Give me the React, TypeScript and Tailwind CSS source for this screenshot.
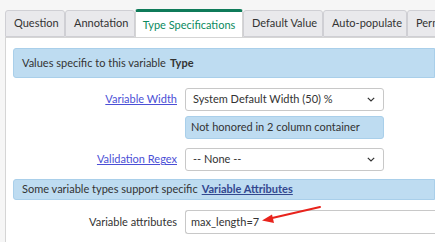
import React from "react";

const tabs = [
  { label: "Question", w: "w-[60px]" },
  { label: "Annotation", w: "w-[70px]" },
  { label: "Type Specifications", w: "w-[108px]", active: true },
  { label: "Default Value", w: "w-[80px]" },
  { label: "Auto-populate", w: "w-[84px]" },
  { label: "Permissions", w: "w-[90px]" },
];

function Chevron() {
  return (
    <svg width="8" height="5" viewBox="0 0 8 5" className="shrink-0">
      <path d="M0.8 0.8l3.2 3.2 3.2-3.2" fill="none" stroke="#333" strokeWidth="1.2" />
    </svg>
  );
}

export default function App() {
  return (
    <div className="relative w-[435px] h-[242px] overflow-hidden bg-[#f6f6f6] font-['Lato','Noto_Sans',sans-serif] text-[11px] text-[#333]">
      <div className="flex pt-[9px] pl-[5px] whitespace-nowrap">
        {tabs.map((t) =>
          t.active ? (
            <div
              key={t.label}
              className={`${t.w} shrink-0 h-[28px] -mb-px bg-white border-t-[3px] border-t-[#0f7b5a] border-x border-x-[#d5d5d5] rounded-t-[3px] flex items-center justify-center text-[#0a8a60] pt-[1px] z-10`}
            >
              {t.label}
            </div>
          ) : (
            <div
              key={t.label}
              className={`${t.w} shrink-0 h-[27px] mt-[1px] bg-[#e9e9ec] border border-[#cfcfd4] rounded-t-[3px] flex items-center pl-[8px] overflow-hidden`}
            >
              {t.label}
            </div>
          )
        )}
      </div>

      <div className="ml-[5px] bg-white border-l border-t border-[#d5d5d5] pl-[7px] pt-[10px] h-full">
        <div className="h-[30px] bg-[#bedcf1] border border-[#a9cfea] rounded-l-[3px] flex items-center pl-[8px]">
          Values specific to this variable <b className="ml-1 font-bold">Type</b>
        </div>

        <div className="flex mt-[10px]">
          <div className="w-[164px] h-[23px] flex items-center justify-end">
            <a className="text-[#4b4fd6] underline">Variable Width</a>
          </div>
          <div className="ml-[8px] w-[199px]">
            <div className="h-[23px] border border-[#c8c8c8] rounded-[3px] bg-white flex items-center justify-between pl-[7px] pr-[8px]">
              <span>System Default Width (50) %</span>
              <Chevron />
            </div>
            <div className="h-[23px] mt-[5px] bg-[#bedcf1] border border-[#a9cfea] rounded-[3px] flex items-center pl-[5px]">
              Not honored in 2 column container
            </div>
          </div>
        </div>

        <div className="flex mt-[9px]">
          <div className="w-[164px] h-[23px] flex items-center justify-end">
            <a className="text-[#4b4fd6] underline">Validation Regex</a>
          </div>
          <div className="ml-[8px] w-[199px] h-[23px] border border-[#c8c8c8] rounded-[3px] bg-white flex items-center justify-between pl-[7px] pr-[8px]">
            <span>-- None --</span>
            <Chevron />
          </div>
        </div>

        <div className="h-[21px] mt-[8px] bg-[#bedcf1] border border-[#a9cfea] rounded-l-[3px] flex items-center pl-[8px] whitespace-nowrap">
          Some variable types support specific{" "}
          <a className="ml-1 font-bold text-[#33478f] underline">Variable Attributes</a>
        </div>

        <div className="flex mt-[10px]">
          <div className="w-[164px] h-[24px] flex items-center justify-end">
            Variable attributes
          </div>
          <div className="ml-[8px] flex-1 h-[24px] border border-[#c8c8c8] border-r-0 rounded-l-[3px] bg-white flex items-center pl-[5px]">
            max_length=7
          </div>
        </div>
      </div>

      <svg className="absolute left-0 top-0" width="435" height="242" viewBox="0 0 435 242">
        <line x1="320" y1="207" x2="270" y2="218.5" stroke="#e8231c" strokeWidth="2" strokeLinecap="round" />
        <path d="M262 220.5 L272 214.5 L274 223 Z" fill="#e8231c" />
      </svg>
    </div>
  );
}
